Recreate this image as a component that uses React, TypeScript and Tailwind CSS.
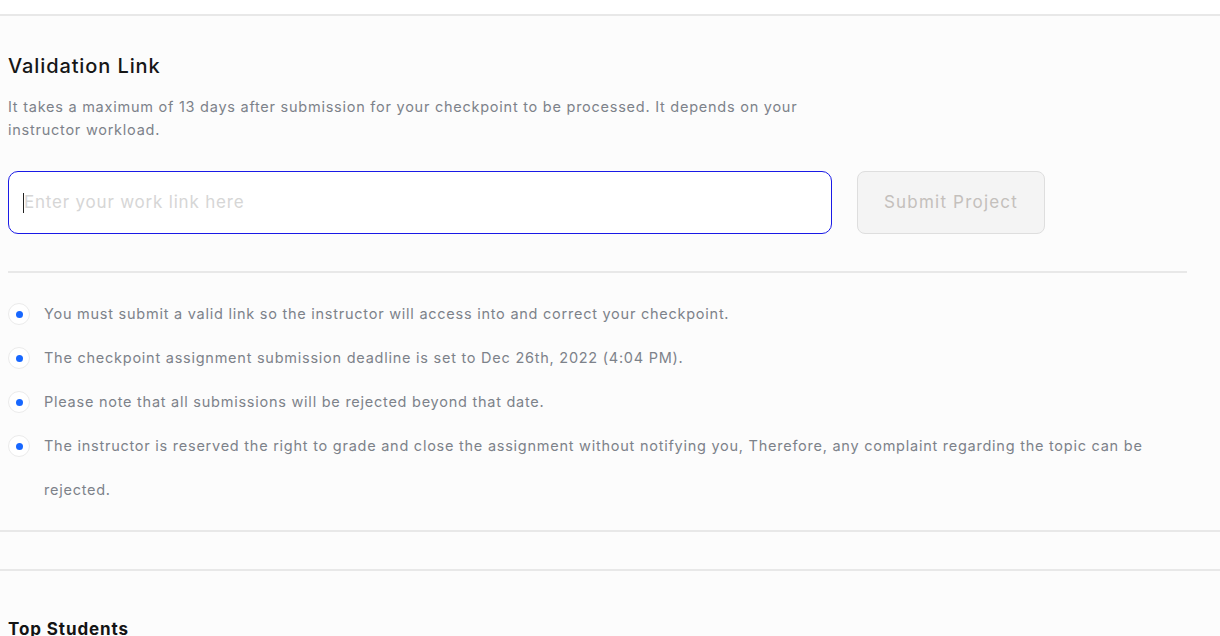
import React from "react";

const items = [
  "You must submit a valid link so the instructor will access into and correct your checkpoint.",
  "The checkpoint assignment submission deadline is set to Dec 26th, 2022 (4:04 PM).",
  "Please note that all submissions will be rejected beyond that date.",
  "The instructor is reserved the right to grade and close the assignment without notifying you, Therefore, any complaint regarding the topic can be rejected.",
];

export default function App() {
  return (
    <div
      className="w-[1220px] h-[636px] overflow-hidden bg-[#fcfcfc]"
      style={{ fontFamily: "Inter, 'Noto Sans', sans-serif" }}
    >
      <div className="h-[14px] bg-white" />
      <div className="h-[2px] bg-[#e8e8e8]" />
      <div className="px-2">
        <h2 className="mt-[36px] text-[20px] leading-[28px] font-medium text-[#161616] tracking-[0.9px]">
          Validation Link
        </h2>
        <p className="mt-[15px] max-w-[830px] text-[14.5px] leading-[23px] text-[#7d828a] tracking-[0.75px]">
          It takes a maximum of 13 days after submission for your checkpoint to be processed. It depends on your instructor workload.
        </p>
        <div className="mt-[30px] flex items-center gap-[25px]">
          <div className="w-[824px] h-[63px] rounded-[10px] border border-[#1a1ae6] bg-white flex items-center pl-[14px]">
            <div className="w-px h-[20px] bg-[#222]" />
            <span className="text-[17px] text-[#d6d6d6] tracking-[0.8px]">Enter your work link here</span>
          </div>
          <button className="w-[188px] h-[63px] rounded-[8px] border border-[#dedede] bg-[#f4f4f4] text-[17px] text-[#c4c0bc] tracking-[1.2px]">
            Submit Project
          </button>
        </div>
        <div className="mt-[37px] w-[1179px] h-[2px] bg-[#e8e8e8]" />
        <ul className="mt-[19px] w-[1179px]">
          {items.map((t) => (
            <li key={t} className="flex items-start">
              <span className="mt-[11px] shrink-0 w-[22px] h-[22px] rounded-full border border-[#ebebeb] bg-white flex items-center justify-center">
                <span className="w-[7px] h-[7px] rounded-full bg-[#1767ff]" />
              </span>
              <span className="ml-[14px] text-[14.5px] leading-[44px] text-[#7d828a] tracking-[0.75px]">{t}</span>
            </li>
          ))}
        </ul>
      </div>
      <div className="mt-[18px] h-[2px] bg-[#e8e8e8]" />
      <div className="h-[37px]" />
      <div className="h-[2px] bg-[#e8e8e8]" />
      <h3 className="mt-[46px] px-2 text-[17px] leading-[24px] font-bold text-[#141414] tracking-[0.9px]">Top Students</h3>
    </div>
  );
}
